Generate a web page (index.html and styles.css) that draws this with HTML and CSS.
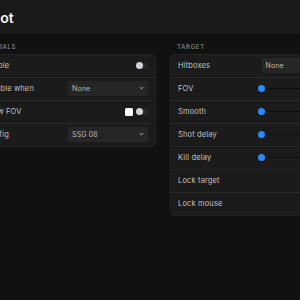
FILE: index.html
```html
<!DOCTYPE html>
<html lang="en">
<head>
    <meta charset="UTF-8">
    <title>Aimbot</title>
    <link rel="stylesheet" href="styles.css">
</head>
<body>
    <div class="app">
        <div class="page-header">
            <h1>Aimbot</h1>
        </div>

        <div class="columns">
            <div class="group">
                <div class="group-title">Globals</div>
                <div class="card">
                    <div class="row">
                        <span>Enable</span>
                        <div class="toggle"><div class="knob"></div></div>
                    </div>
                    <div class="row">
                        <span>Disable when</span>
                        <div class="select">None<span class="chev"></span></div>
                    </div>
                    <div class="row">
                        <span>Draw FOV</span>
                        <div class="controls">
                            <div class="swatch"></div>
                            <div class="toggle"><div class="knob"></div></div>
                        </div>
                    </div>
                    <div class="row">
                        <span>Config</span>
                        <div class="select">SSG 08<span class="chev"></span></div>
                    </div>
                </div>
            </div>

            <div class="group">
                <div class="group-title">Target</div>
                <div class="card">
                    <div class="row">
                        <span>Hitboxes</span>
                        <div class="select">None<span class="chev"></span></div>
                    </div>
                    <div class="row">
                        <span>FOV</span>
                        <div class="slider"><div class="thumb"></div><div class="track"></div></div>
                    </div>
                    <div class="row">
                        <span>Smooth</span>
                        <div class="slider"><div class="thumb"></div><div class="track"></div></div>
                    </div>
                    <div class="row">
                        <span>Shot delay</span>
                        <div class="slider"><div class="thumb"></div><div class="track"></div></div>
                    </div>
                    <div class="row">
                        <span>Kill delay</span>
                        <div class="slider"><div class="thumb"></div><div class="track"></div></div>
                    </div>
                    <div class="row">
                        <span>Lock target</span>
                    </div>
                    <div class="row">
                        <span>Lock mouse</span>
                    </div>
                </div>
            </div>
        </div>
    </div>
</body>
</html>
```

FILE: styles.css
```css
body {
    margin: 0;
    background: #111111;
    color: #c2c2c2;
    font-family: Inter, 'Noto Sans', sans-serif;
    overflow: hidden;
}

.app {
    margin-left: -44px;
    width: 440px;
}

.page-header {
    height: 34px;
    background: #1a1a1a;
    display: flex;
    align-items: center;
    padding-left: 9px;
}

.page-header h1 {
    margin: 0;
    font-size: 14px;
    font-weight: 600;
    color: #f2f2f2;
}

.columns {
    display: grid;
    grid-template-columns: 180px 180px;
    gap: 13.5px;
    padding: 8px 20px 0;
}

.group-title {
    font-size: 6px;
    line-height: 10px;
    font-weight: 500;
    letter-spacing: 0.7px;
    text-transform: uppercase;
    color: #8c8c8c;
    padding-left: 7.5px;
    margin-bottom: 1.5px;
}

.card {
    background: #1b1b1b;
    border: 1px solid #242424;
    border-radius: 5px;
}

.row {
    height: 22px;
    padding: 0 7px 0 7.5px;
    display: flex;
    align-items: center;
    justify-content: space-between;
    font-size: 7.5px;
    letter-spacing: 0.15px;
    border-bottom: 1px solid #262626;
}

.row:last-child {
    border-bottom: none;
}

.select {
    width: 80px;
    height: 15px;
    box-sizing: border-box;
    background: #262626;
    border-radius: 3px;
    padding: 0 4px;
    display: flex;
    align-items: center;
    justify-content: space-between;
    color: #b8b8b8;
    font-size: 7px;
}

.chev {
    width: 2px;
    height: 2px;
    border-right: 1px solid #8a8a8a;
    border-bottom: 1px solid #8a8a8a;
    transform: rotate(45deg);
    margin: -2px 1px 0 0;
}

.controls {
    display: flex;
    align-items: center;
    gap: 3px;
}

.swatch {
    width: 8px;
    height: 8px;
    background: #ffffff;
    border-radius: 1.5px;
}

.toggle {
    width: 12px;
    height: 6px;
    background: #262626;
    border-radius: 3px;
    display: flex;
    align-items: center;
}

.knob {
    width: 7.5px;
    height: 7.5px;
    border-radius: 50%;
    background: #d2d2d8;
    margin-left: -0.5px;
}

.slider {
    width: 80px;
    display: flex;
    align-items: center;
}

.thumb {
    width: 7px;
    height: 7px;
    border-radius: 50%;
    background: #2a8bff;
    margin-left: -3.5px;
    flex-shrink: 0;
}

.track {
    flex: 1;
    height: 1.5px;
    background: #101010;
}
```
